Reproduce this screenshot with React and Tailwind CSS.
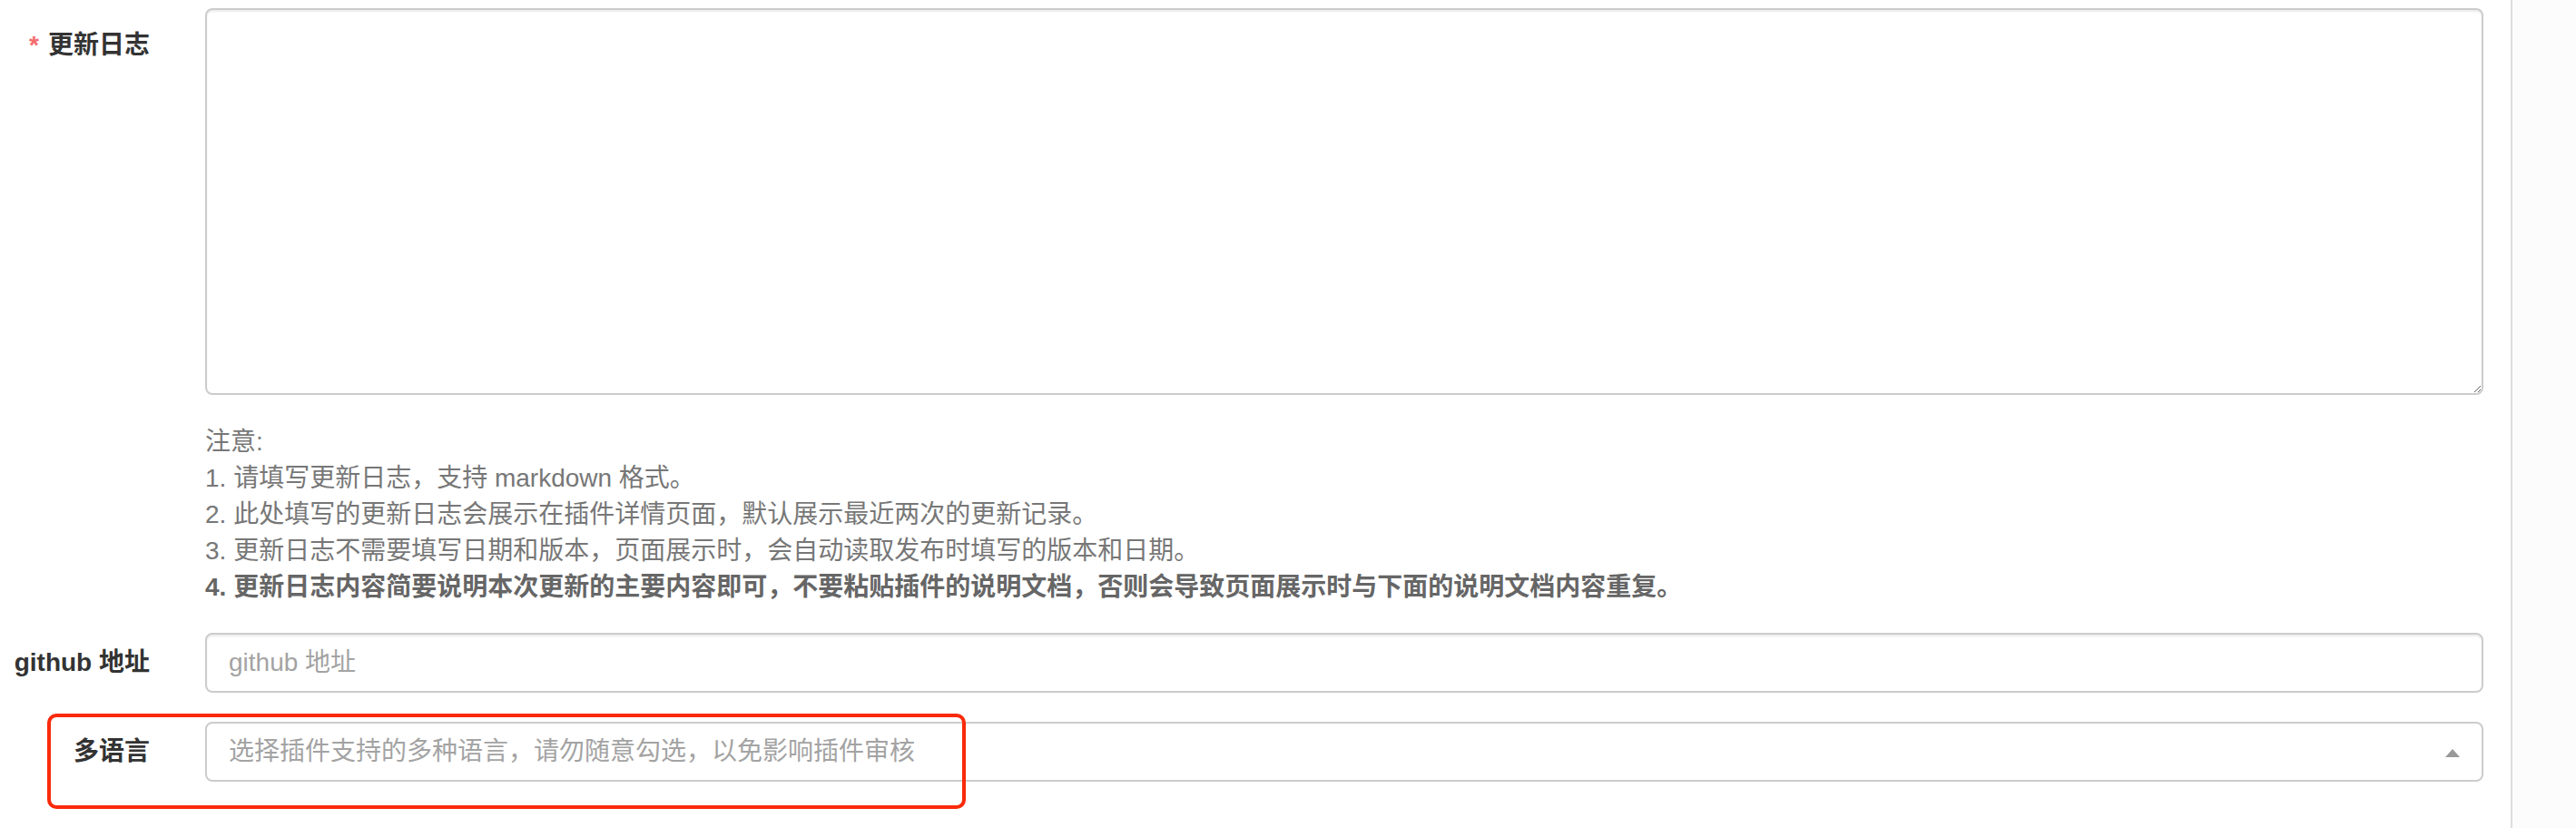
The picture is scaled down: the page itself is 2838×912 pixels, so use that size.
import React from "react";

const font = { fontFamily: '"Liberation Sans", "Noto Sans CJK SC", sans-serif' };

export default function App() {
  return (
    <div className="flex w-[2838px] h-[912px] bg-white overflow-hidden" style={font}>
      <div className="w-[2768px] border-r-2 border-[#dedede] pr-[30px]">
        {/* Row 1: changelog */}
        <div className="flex pt-[9px]">
          <div className="w-[226px] shrink-0 pr-[61px] pt-[21px] text-right text-[28px] leading-[40px] font-bold text-[#333]">
            <span className="text-[#f56c6c] font-bold mr-[10px]">*</span>更新日志
          </div>
          <div className="flex-1">
            <textarea
              className="block w-full h-[426px] border-2 border-[#cccccc] rounded-[8px] shadow-[inset_0_2px_2px_rgba(0,0,0,0.075)] outline-none px-[24px] py-[12px] text-[28px]"
            />
            <div className="mt-[32px] text-[28px] leading-[40px] text-[#777]">
              <div>注意:</div>
              <div>1. 请填写更新日志，支持 markdown 格式。</div>
              <div>2. 此处填写的更新日志会展示在插件详情页面，默认展示最近两次的更新记录。</div>
              <div>3. 更新日志不需要填写日期和版本，页面展示时，会自动读取发布时填写的版本和日期。</div>
              <div className="font-bold text-[#666]">4. 更新日志内容简要说明本次更新的主要内容即可，不要粘贴插件的说明文档，否则会导致页面展示时与下面的说明文档内容重复。</div>
            </div>
          </div>
        </div>

        {/* Row 2: github */}
        <div className="flex items-center mt-[30px]">
          <div className="w-[226px] shrink-0 pr-[61px] text-right text-[28px] leading-[40px] font-bold text-[#333]">
            github 地址
          </div>
          <div className="flex-1 h-[66px] border-2 border-[#cccccc] rounded-[8px] shadow-[inset_0_2px_2px_rgba(0,0,0,0.075)] flex items-center pl-[24px] text-[28px] text-[#a3a3a3]">
            github 地址
          </div>
        </div>

        {/* Row 3: languages */}
        <div className="relative flex items-center mt-[32px]">
          <div className="w-[226px] shrink-0 pr-[61px] text-right text-[28px] leading-[40px] font-bold text-[#333]">
            多语言
          </div>
          <div className="flex-1 h-[66px] border-2 border-[#cccccc] rounded-[8px] flex items-center justify-between pl-[24px] pr-[24px] text-[28px] text-[#a3a3a3]">
            <span>选择插件支持的多种语言，请勿随意勾选，以免影响插件审核</span>
            <svg width="16" height="9" viewBox="0 0 16 9" className="mt-[2px]">
              <polygon points="0,9 8,0 16,9" fill="#999" />
            </svg>
          </div>
          <div className="absolute left-[52px] top-[-9px] w-[1012px] h-[105px] border-[4px] border-[#fa2a0a] rounded-[10px] pointer-events-none" />
        </div>
      </div>
      <div className="flex-1 bg-[#fcfcfc]" />
    </div>
  );
}
